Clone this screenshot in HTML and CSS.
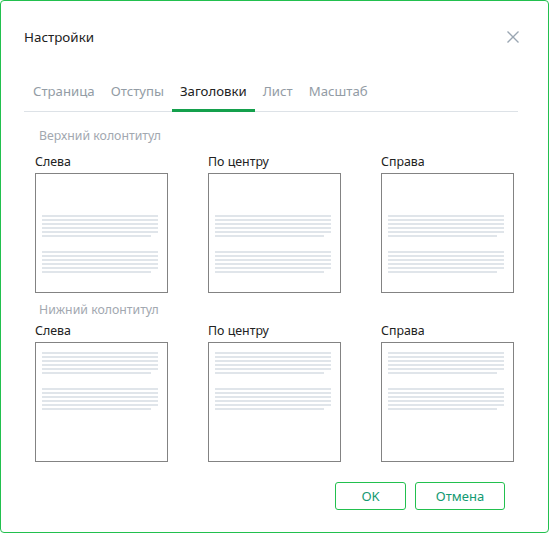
FILE: index.html
```html
<!DOCTYPE html>
<html lang="ru">
<head>
    <meta charset="UTF-8">
    <title>Настройки</title>
    <link rel="stylesheet" href="styles.css">
</head>
<body>
    <div class="dialog">
        <div class="header">
            <span class="title">Настройки</span>
            <svg class="close" width="12" height="12" viewBox="0 0 12 12">
                <path d="M0.5 0.5 L11.5 11.5 M11.5 0.5 L0.5 11.5" stroke="#9aa6b2" stroke-width="1.3" fill="none"/>
            </svg>
        </div>

        <div class="tabs">
            <span class="tab">Страница</span>
            <span class="tab">Отступы</span>
            <span class="tab active">Заголовки</span>
            <span class="tab">Лист</span>
            <span class="tab">Масштаб</span>
        </div>

        <div class="group-label first">Верхний колонтитул</div>
        <div class="row">
            <div class="col">
                <div class="col-label">Слева</div>
                <div class="page top-text"><div class="para"></div><div class="para"></div></div>
            </div>
            <div class="col">
                <div class="col-label">По центру</div>
                <div class="page top-text"><div class="para"></div><div class="para"></div></div>
            </div>
            <div class="col">
                <div class="col-label">Справа</div>
                <div class="page top-text"><div class="para"></div><div class="para"></div></div>
            </div>
        </div>

        <div class="group-label">Нижний колонтитул</div>
        <div class="row second">
            <div class="col">
                <div class="col-label">Слева</div>
                <div class="page bottom-text"><div class="para"></div><div class="para"></div></div>
            </div>
            <div class="col">
                <div class="col-label">По центру</div>
                <div class="page bottom-text"><div class="para"></div><div class="para"></div></div>
            </div>
            <div class="col">
                <div class="col-label">Справа</div>
                <div class="page bottom-text"><div class="para"></div><div class="para"></div></div>
            </div>
        </div>

        <div class="footer">
            <button class="button ok">OK</button>
            <button class="button cancel">Отмена</button>
        </div>
    </div>
</body>
</html>
```

FILE: styles.css
```css
body {
    margin: 0;
    font-family: "Noto Sans", "Open Sans", sans-serif;
    font-size: 13px;
    color: #222;
    background: #fff;
}
.dialog {
    box-sizing: border-box;
    width: 549px;
    height: 533px;
    border: 1px solid #22c04e;
    border-radius: 4px;
    padding: 0 30px 0 23px;
}
.header {
    display: flex;
    justify-content: space-between;
    align-items: center;
    padding-top: 27px;
    height: 18px;
}
.title {
    font-size: 13.4px;
    line-height: 18px;
}
.close {
    margin-right: -1px;
}
.tabs {
    display: flex;
    margin-top: 27px;
    border-bottom: 1px solid #dde2e7;
}
.tab {
    padding: 9px 8px 9px;
    font-size: 13.2px;
    line-height: 18px;
    color: #939ca5;
    border-bottom: 3px solid transparent;
    margin-bottom: -1px;
}
.tab:first-child {
    margin-left: 1px;
}
.tab.active {
    color: #222;
    border-bottom-color: #14a04c;
}
.group-label {
    margin: 8px 0 0 15px;
    font-size: 12.3px;
    line-height: 18px;
    color: #a2a8b0;
}
.group-label.first {
    margin-top: 15px;
}
.row {
    display: flex;
    gap: 40px;
    padding-left: 11px;
}
.col-label {
    margin-top: 8px;
    font-size: 12.4px;
    line-height: 18px;
}
.second .col-label {
    margin-top: 3px;
}
.page {
    box-sizing: border-box;
    width: 133px;
    height: 120px;
    margin-top: 2px;
    border: 1px solid #838383;
    padding: 0 9px 0 6px;
}
.top-text {
    padding-top: 41px;
}
.bottom-text {
    padding-top: 9px;
}
.para {
    height: 22px;
    display: flex;
    align-items: flex-end;
    background: repeating-linear-gradient(to bottom, #e0e5ea 0 2px, transparent 2px 4px) top / 100% 18px no-repeat;
}
.para::after {
    content: "";
    flex: 1;
    height: 2px;
    margin-right: 7px;
    background: #e0e5ea;
}
.para + .para {
    margin-top: 14px;
}
.footer {
    display: flex;
    justify-content: flex-end;
    gap: 9px;
    margin-top: 20px;
    padding-right: 13px;
}
.button {
    height: 28px;
    border: 1px solid #22c04e;
    border-radius: 3px;
    background: #fff;
    color: #139a72;
    font-family: inherit;
    font-size: 13px;
    padding: 0;
}
.ok {
    width: 71px;
}
.cancel {
    width: 90px;
}
```
